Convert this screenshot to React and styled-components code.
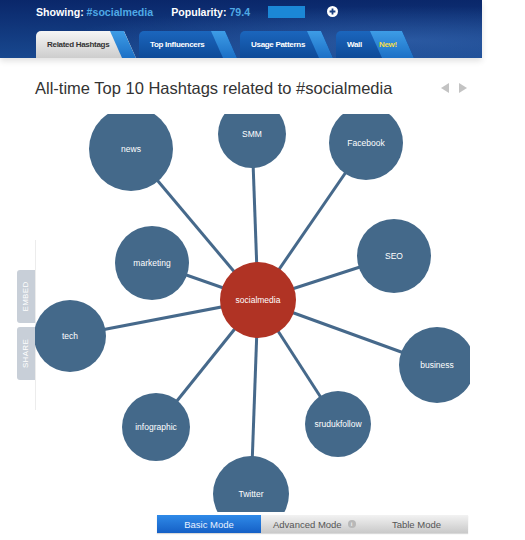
import React from 'react'
import styled, { createGlobalStyle } from 'styled-components'

const GlobalStyle = createGlobalStyle`
body {
  margin: 0;
  background: #fff;
  font-family: "Liberation Sans", Arial, sans-serif;
}
`

const Page = styled.div`
width: 525px;
height: 540px;
overflow: hidden;
`

const Header = styled.div`
width: 482px;
height: 58px;
box-sizing: border-box;
padding: 4px 0 0 36px;
background: radial-gradient(ellipse at 85% 70%, rgba(60, 110, 185, .55), rgba(60, 110, 185, 0) 60%),
  linear-gradient(to bottom, #0a276a, #18488f);
box-shadow: 0 3px 6px rgba(0, 0, 0, .12);
`

const StatRow = styled.div`
display: flex;
align-items: center;
height: 15px;
font-size: 10.6px;
font-weight: bold;
color: #fff;
`

const Stat = styled.span`
margin-right: ${p => p.gap}px;
white-space: nowrap;
`

const Value = styled.span`
color: #4fa9e6;
`

const PopBar = styled.div`
height: 12px;
background: #1b87d6;
margin-right: 22px;
`

const TabRow = styled.div`
display: flex;
gap: 3px;
margin-top: 12px;
`

const Tab = styled.div`
position: relative;
width: ${p => p.w}px;
height: 27px;
box-sizing: border-box;
padding-left: 11px;
display: flex;
align-items: center;
gap: 17px;
font-size: 8px;
letter-spacing: -0.3px;
font-weight: bold;
border-radius: 5px 0 0 0;
clip-path: polygon(0 0, calc(100% - 12px) 0, 100% 100%, 0 100%);
color: ${p => (p.active ? '#333' : '#fff')};
background: ${p => (p.active
    ? 'linear-gradient(to bottom, #f6f6f6, #cdcdcd)'
    : 'linear-gradient(to bottom, #1b66bd, #0e4a98)')};

&::after {
  content: '';
  position: absolute;
  top: 0;
  right: 0;
  bottom: 0;
  width: ${p => p.wedge}px;
  background: linear-gradient(to bottom, #3d9ce6, #1c70c6);
  clip-path: polygon(0 0, calc(100% - 12px) 0, 100% 100%, 12px 100%);
}
`

const TabLabel = styled.span`
position: relative;
z-index: 1;
white-space: nowrap;
color: ${p => p.color || 'inherit'};
`

const TitleRow = styled.div`
width: 482px;
height: 56px;
box-sizing: border-box;
padding: 4px 15px 0 35px;
display: flex;
align-items: center;
justify-content: space-between;
`

const Title = styled.h1`
margin: 0;
font-size: 16.5px;
font-weight: normal;
color: #333;
`

const Arrows = styled.div`
display: flex;
gap: 10px;
`

const Arrow = styled.span`
width: 0;
height: 0;
border-top: 5px solid transparent;
border-bottom: 5px solid transparent;
border-${p => (p.dir === 'left' ? 'right' : 'left')}: 8px solid #c3c3c3;
`

const GraphRow = styled.div`
display: flex;
height: 398px;
padding-left: 17px;
`

const SideTabs = styled.div`
width: 18px;
padding-top: 156px;
display: flex;
flex-direction: column;
gap: 4px;
`

const SideTab = styled.div`
height: 53px;
background: #c8cfd8;
border-radius: 3px 0 0 3px;
display: flex;
align-items: center;
justify-content: center;
color: #fff;
font-size: 8px;
letter-spacing: .3px;

span {
  transform: rotate(-90deg);
  white-space: nowrap;
}
`

const ModeBar = styled.div`
display: flex;
width: 311px;
height: 18px;
margin: 3px 0 0 157px;
font-size: 9.5px;
box-shadow: 0 1px 1px rgba(0, 0, 0, .15);
`

const Mode = styled.div`
width: ${p => (p.w ? `${p.w}px` : 'auto')};
flex: ${p => (p.w ? 'none' : 1)};
display: flex;
align-items: center;
justify-content: ${p => (p.left ? 'flex-start' : 'center')};
padding-left: ${p => (p.left ? 12 : 0)}px;
box-sizing: border-box;
gap: 6px;
color: ${p => (p.active ? '#e8f1ff' : '#555')};
background: ${p => (p.active
    ? 'linear-gradient(to bottom, #2f8ae8, #1560c6)'
    : 'linear-gradient(to bottom, #f2f2f2, #c9c9c9)')};
`

const Info = styled.span`
width: 8px;
height: 8px;
border-radius: 50%;
background: #b8b8b8;
color: #eee;
font-size: 6px;
font-weight: bold;
display: inline-flex;
align-items: center;
justify-content: center;
`

const center = { x: 223, y: 186, r: 38, label: 'socialmedia' }

const nodes = [
  { x: 96, y: 35, r: 42, label: 'news' },
  { x: 217, y: 20, r: 34, label: 'SMM' },
  { x: 331, y: 29, r: 37, label: 'Facebook' },
  { x: 359, y: 142, r: 37, label: 'SEO' },
  { x: 117, y: 149, r: 37, label: 'marketing' },
  { x: 35, y: 222, r: 36, label: 'tech' },
  { x: 402, y: 251, r: 38, label: 'business' },
  { x: 303, y: 310, r: 33, label: 'srudukfollow' },
  { x: 121, y: 313, r: 34, label: 'infographic' },
  { x: 216, y: 380, r: 38, label: 'Twitter' },
]

function Graph() {
  return (
    <svg width="435" height="398" viewBox="0 0 435 398">
      <line x1="0.5" y1="126" x2="0.5" y2="296" stroke="#ececec" strokeWidth="1" />
      {nodes.map(n => (
        <line key={'l' + n.label} x1={center.x} y1={center.y} x2={n.x} y2={n.y} stroke="#46698b" strokeWidth="3" />
      ))}
      {nodes.map(n => (
        <g key={n.label}>
          <circle cx={n.x} cy={n.y} r={n.r} fill="#44698a" />
          <text x={n.x} y={n.y + 3} textAnchor="middle" fill="#fff" fontSize="8.5" fontFamily="Liberation Sans, Arial, sans-serif">
            {n.label}
          </text>
        </g>
      ))}
      <circle cx={center.x} cy={center.y} r={center.r} fill="#b03324" />
      <text x={center.x} y={center.y + 3} textAnchor="middle" fill="#fff" fontSize="8.5" fontFamily="Liberation Sans, Arial, sans-serif">
        {center.label}
      </text>
    </svg>
  )
}

function PlusIcon() {
  return (
    <svg width="11" height="11" viewBox="0 0 11 11">
      <circle cx="5.5" cy="5.5" r="5.5" fill="#fff" />
      <path d="M5.5 2.6v5.8M2.6 5.5h5.8" stroke="#173e80" strokeWidth="1.8" />
    </svg>
  )
}

export default function App() {
  return (
    <Page>
      <GlobalStyle />
      <Header>
        <StatRow>
          <Stat gap={18}>Showing: <Value>#socialmedia</Value></Stat>
          <Stat gap={18}>Popularity: <Value>79.4</Value></Stat>
          <PopBar style={{ width: 37 }} />
          <PlusIcon />
        </StatRow>
        <TabRow>
          <Tab active w={100} wedge={26}><TabLabel>Related Hashtags</TabLabel></Tab>
          <Tab w={98} wedge={26}><TabLabel>Top Influencers</TabLabel></Tab>
          <Tab w={93} wedge={26}><TabLabel>Usage Patterns</TabLabel></Tab>
          <Tab w={78} wedge={44}>
            <TabLabel>Wall</TabLabel>
            <TabLabel color="#f0de4c">New!</TabLabel>
          </Tab>
        </TabRow>
      </Header>
      <TitleRow>
        <Title>All-time Top 10 Hashtags related to #socialmedia</Title>
        <Arrows>
          <Arrow dir="left" />
          <Arrow dir="right" />
        </Arrows>
      </TitleRow>
      <GraphRow>
        <SideTabs>
          <SideTab><span>EMBED</span></SideTab>
          <SideTab><span>SHARE</span></SideTab>
        </SideTabs>
        <Graph />
      </GraphRow>
      <ModeBar>
        <Mode active w={104}>Basic Mode</Mode>
        <Mode w={104} left>Advanced Mode <Info>i</Info></Mode>
        <Mode>Table Mode</Mode>
      </ModeBar>
    </Page>
  )
}
